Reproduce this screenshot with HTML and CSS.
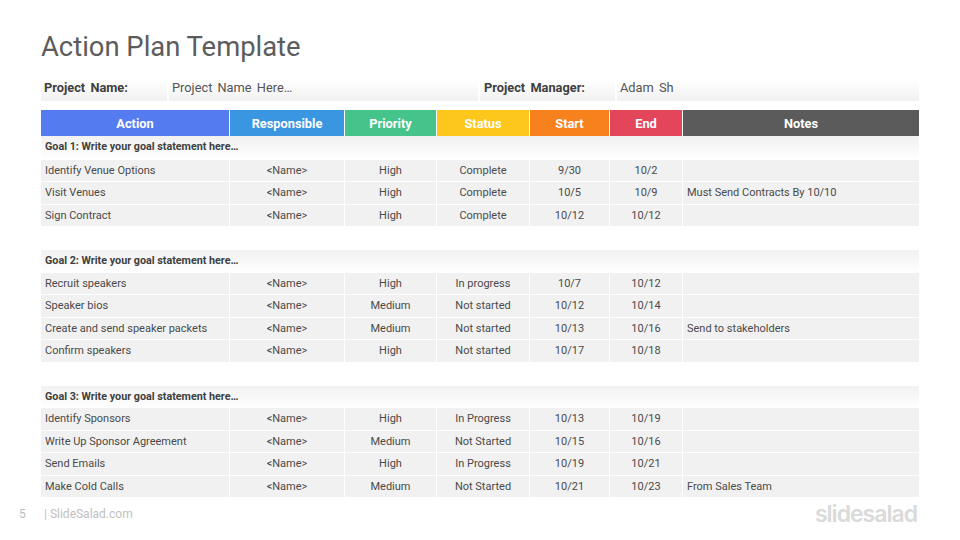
FILE: index.html
```html
<!DOCTYPE html>
<html lang="en">
<head>
<meta charset="utf-8">
<title>Action Plan Template</title>
<link rel="stylesheet" href="styles.css">
</head>
<body>
<main class="slide">
  <h1 class="title">Action Plan Template</h1>
  <div class="project">
    <div class="p-cell p-label p-name-label">Project Name:</div>
    <div class="p-cell p-value p-name-value">Project Name Here…</div>
    <div class="p-cell p-label p-mgr-label">Project Manager:</div>
    <div class="p-cell p-value p-mgr-value">Adam Sh</div>
  </div>
  <div class="table">
    <div class="row head">
      <div class="c h-action">Action</div><div class="c h-resp">Responsible</div><div class="c h-prio">Priority</div><div class="c h-stat">Status</div><div class="c h-start">Start</div><div class="c h-end">End</div><div class="c h-notes">Notes</div>
    </div>
    <div class="goal first">Goal 1: Write your goal statement here…</div>
    <div class="row"><div class="c l">Identify Venue Options</div><div class="c">&lt;Name&gt;</div><div class="c">High</div><div class="c">Complete</div><div class="c">9/30</div><div class="c">10/2</div><div class="c l"></div></div>
    <div class="row"><div class="c l">Visit Venues</div><div class="c">&lt;Name&gt;</div><div class="c">High</div><div class="c">Complete</div><div class="c">10/5</div><div class="c">10/9</div><div class="c l">Must Send Contracts By 10/10</div></div>
    <div class="row"><div class="c l">Sign Contract</div><div class="c">&lt;Name&gt;</div><div class="c">High</div><div class="c">Complete</div><div class="c">10/12</div><div class="c">10/12</div><div class="c l"></div></div>
    <div class="goal spaced">Goal 2: Write your goal statement here…</div>
    <div class="row"><div class="c l">Recruit speakers</div><div class="c">&lt;Name&gt;</div><div class="c">High</div><div class="c">In progress</div><div class="c">10/7</div><div class="c">10/12</div><div class="c l"></div></div>
    <div class="row"><div class="c l">Speaker bios</div><div class="c">&lt;Name&gt;</div><div class="c">Medium</div><div class="c">Not started</div><div class="c">10/12</div><div class="c">10/14</div><div class="c l"></div></div>
    <div class="row"><div class="c l">Create and send speaker packets</div><div class="c">&lt;Name&gt;</div><div class="c">Medium</div><div class="c">Not started</div><div class="c">10/13</div><div class="c">10/16</div><div class="c l">Send to stakeholders</div></div>
    <div class="row"><div class="c l">Confirm speakers</div><div class="c">&lt;Name&gt;</div><div class="c">High</div><div class="c">Not started</div><div class="c">10/17</div><div class="c">10/18</div><div class="c l"></div></div>
    <div class="goal spaced">Goal 3: Write your goal statement here…</div>
    <div class="row"><div class="c l">Identify Sponsors</div><div class="c">&lt;Name&gt;</div><div class="c">High</div><div class="c">In Progress</div><div class="c">10/13</div><div class="c">10/19</div><div class="c l"></div></div>
    <div class="row"><div class="c l">Write Up Sponsor Agreement</div><div class="c">&lt;Name&gt;</div><div class="c">Medium</div><div class="c">Not Started</div><div class="c">10/15</div><div class="c">10/16</div><div class="c l"></div></div>
    <div class="row"><div class="c l">Send Emails</div><div class="c">&lt;Name&gt;</div><div class="c">High</div><div class="c">In Progress</div><div class="c">10/19</div><div class="c">10/21</div><div class="c l"></div></div>
    <div class="row"><div class="c l">Make Cold Calls</div><div class="c">&lt;Name&gt;</div><div class="c">Medium</div><div class="c">Not Started</div><div class="c">10/21</div><div class="c">10/23</div><div class="c l">From Sales Team</div></div>
  </div>
  <footer class="footer">
    <span class="page">5</span>
    <span class="site">| SlideSalad.com</span>
    <span class="logo">slidesalad</span>
  </footer>
</main>
</body>
</html>
```
FILE: styles.css
```css
* { box-sizing: border-box; }
html, body { margin: 0; padding: 0; }
body { width: 960px; height: 540px; overflow: hidden; background: #fff; font-family: Roboto, sans-serif; }
.slide { width: 960px; height: 540px; padding: 29px 41px 0; display: flex; flex-direction: column; }
.title { margin: 0; font-size: 27.4px; line-height: 36px; font-weight: 400; color: #5c5c5c; height: 50px; }
.project { display: grid; grid-template-columns: 126px 309px 135px 1fr; column-gap: 2px; height: 22px; font-size: 12.8px; margin-bottom: 9px; color: #404040; word-spacing: 2px; }
.p-cell { display: flex; align-items: center; background: linear-gradient(#fff, #f1f1f1); padding: 0 0 6px 3px; height: 22px; }
.p-label { font-weight: 700; }
.p-value { font-weight: 400; color: #555; }
.p-mgr-label { padding-left: 4px; }
.table { display: flex; flex-direction: column; font-size: 11px; color: #4a4a4a; }
.row { display: grid; grid-template-columns: 188px 114px 91px 92px 79px 72px 236px; column-gap: 1px; height: 21.5px; margin-bottom: 1px; }
.c { display: flex; align-items: center; justify-content: center; background: #f1f1f1; white-space: nowrap; }
.c.l { justify-content: flex-start; padding-left: 4px; }
.head { height: 26px; margin-bottom: 0; font-size: 12.8px; font-weight: 700; color: #fff; }
.head .c { background: #555; }
.head .h-action { background: #547bf0; }
.head .h-resp { background: #3a96e0; }
.head .h-prio { background: #44c48a; }
.head .h-stat { background: #fec71b; }
.head .h-start { background: #f6811d; }
.head .h-end { background: #e3465a; }
.head .h-notes { background: #5b5b5b; }
.goal { height: 22.5px; display: flex; align-items: center; padding: 0 0 1.5px 4px; font-size: 10.75px; font-weight: 700; color: #404040; background: linear-gradient(#f1f1f1, #fff); }
.goal.first { height: 23.5px; padding-bottom: 2px; }
.goal.spaced { margin-top: 23px; }
.footer { display: flex; align-items: center; height: 32px; margin-left: -22px; margin-right: 2px; }
.page { font-size: 12px; color: #bbb; width: 25px; }
.site { font-size: 12px; color: #c0c0c0; flex: 1; }
.logo { font-family: Inter, sans-serif; font-size: 23px; font-weight: 600; color: #dadada; letter-spacing: -1px; }
```
